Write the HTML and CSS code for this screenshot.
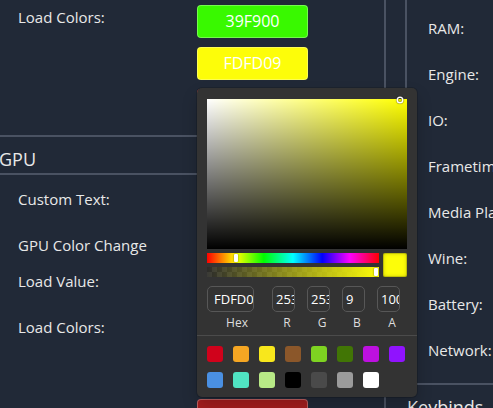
FILE: index.html
```html
<!DOCTYPE html>
<html lang="en">
<head>
<meta charset="utf-8">
<title>Settings</title>
<link rel="stylesheet" href="styles.css">
</head>
<body>
<div class="app">
  <section class="panel panel-left">
    <div class="row row-colors row-first">
      <div class="label">Load Colors:</div>
      <div class="btn-stack">
        <div class="color-btn" style="background:#39F900">39F900</div>
        <div class="color-btn" style="background:#FDFD09">FDFD09</div>
        <div class="color-btn" style="background:#FF0000"></div>
      </div>
    </div>
    <div class="sec-head sec-head-left">GPU</div>
    <div class="row row-46"><div class="label">Custom Text:</div></div>
    <div class="row row-36"><div class="label">GPU Color Change</div></div>
    <div class="row row-46"><div class="label">Load Value:</div></div>
    <div class="row row-colors">
      <div class="label">Load Colors:</div>
      <div class="btn-stack">
        <div class="color-btn" style="background:#39F900"></div>
        <div class="color-btn" style="background:#FDFD09"></div>
        <div class="color-btn" style="background:#A51E1E"></div>
      </div>
    </div>
  </section>
  <section class="panel panel-right">
    <div class="rows">
      <div class="row row-46"><div class="label">RAM:</div></div>
      <div class="row row-46"><div class="label">Engine:</div></div>
      <div class="row row-46"><div class="label">IO:</div></div>
      <div class="row row-46"><div class="label">Frametime:</div></div>
      <div class="row row-46"><div class="label">Media Player:</div></div>
      <div class="row row-46"><div class="label">Wine:</div></div>
      <div class="row row-46"><div class="label">Battery:</div></div>
      <div class="row row-46"><div class="label">Network:</div></div>
    </div>
    <div class="sec-head sec-head-right">Keybinds</div>
  </section>
</div>

<div class="picker">
  <div class="sv">
    <div class="sv-cursor"></div>
  </div>
  <div class="controls">
    <div class="bars">
      <div class="hue"><div class="marker marker-hue"></div></div>
      <div class="alpha"><div class="alpha-fill"></div><div class="marker marker-alpha"></div></div>
    </div>
    <div class="preview"></div>
  </div>
  <div class="fields">
    <div class="field field-hex"><div class="input">FDFD09</div><div class="flabel">Hex</div></div>
    <div class="field"><div class="input">253</div><div class="flabel">R</div></div>
    <div class="field"><div class="input">253</div><div class="flabel">G</div></div>
    <div class="field"><div class="input">9</div><div class="flabel">B</div></div>
    <div class="field"><div class="input">100</div><div class="flabel">A</div></div>
  </div>
  <div class="sep"></div>
  <div class="swatches">
    <div class="swatch" style="background:#D0021B"></div>
    <div class="swatch" style="background:#F5A623"></div>
    <div class="swatch" style="background:#F8E71C"></div>
    <div class="swatch" style="background:#8B572A"></div>
    <div class="swatch" style="background:#7ED321"></div>
    <div class="swatch" style="background:#417505"></div>
    <div class="swatch" style="background:#BD10E0"></div>
    <div class="swatch" style="background:#9013FE"></div>
    <div class="swatch" style="background:#4A90E2"></div>
    <div class="swatch" style="background:#50E3C2"></div>
    <div class="swatch" style="background:#B8E986"></div>
    <div class="swatch" style="background:#000000"></div>
    <div class="swatch" style="background:#4A4A4A"></div>
    <div class="swatch" style="background:#9B9B9B"></div>
    <div class="swatch" style="background:#FFFFFF"></div>
  </div>
</div>
</body>
</html>
```

FILE: styles.css
```css
* {
  box-sizing: border-box;
  margin: 0;
  padding: 0;
}

html,
body {
  width: 493px;
  height: 408px;
  overflow: hidden;
}

body {
  position: relative;
  background: #212937;
  color: #e8e8e8;
  font-family: "Open Sans", "Liberation Sans", sans-serif;
  font-size: 15px;
}

.app {
  display: flex;
  align-items: stretch;
}

.panel-left {
  flex: none;
  width: 389px;
  margin-left: -3px;
  margin-top: -7px;
  border-right: 2px solid #4a5262;
}

.panel-right {
  flex: none;
  width: 220px;
  display: flex;
  flex-direction: column;
}

.rows {
  margin-left: 19px;
  padding-top: 3.5px;
  padding-bottom: 11.5px;
  border-left: 2px solid #4a5262;
}

.row {
  display: flex;
  align-items: flex-start;
  padding: 12px 0 0 21px;
}

.row-46 {
  height: 46px;
}

.row-36 {
  height: 36px;
}

.row-first {
  padding-bottom: 13px;
}

.label {
  flex: none;
  width: 179px;
  line-height: 24px;
  white-space: nowrap;
}

.btn-stack {
  display: flex;
  flex-direction: column;
  gap: 9px;
}

.color-btn {
  width: 111px;
  height: 33px;
  border: 1px solid rgba(255, 255, 255, 0.3);
  border-radius: 4px;
  color: #ffffff;
  font-size: 16px;
  line-height: 31px;
  text-align: center;
}

.sec-head {
  height: 40px;
  padding-top: 9px;
  border-top: 2px solid #4a5262;
  border-bottom: 2px solid #4a5262;
  font-size: 18px;
  line-height: 26px;
  white-space: nowrap;
}

.sec-head-left {
  padding-left: 2px;
}

.sec-head-right {
  padding-left: 21px;
}

/* colour picker popover */
.picker {
  position: absolute;
  left: 197px;
  top: 88px;
  width: 220px;
  padding: 11px 10px 9px;
  background: #333333;
  border-radius: 5px;
  box-shadow: 0 0 0 1px rgba(0, 0, 0, 0.15), 0 8px 16px rgba(0, 0, 0, 0.2);
}

.sv {
  position: relative;
  width: 200px;
  height: 150px;
  background:
    linear-gradient(to top, #000000, rgba(0, 0, 0, 0)),
    linear-gradient(to right, #ffffff, rgba(255, 255, 255, 0)),
    #ffff00;
}

.sv-cursor {
  position: absolute;
  left: 193px;
  top: 1.2px;
  width: 4px;
  height: 4px;
  margin: -2px 0 0 -2px;
  border-radius: 50%;
  box-shadow: 0 0 0 1.5px #ffffff, inset 0 0 1px 1px rgba(0, 0, 0, 0.3), 0 0 1px 2px rgba(0, 0, 0, 0.4);
}

.controls {
  display: flex;
  gap: 4px;
  margin-top: 4px;
}

.bars {
  display: flex;
  flex-direction: column;
  gap: 4px;
  width: 172px;
}

.hue,
.alpha {
  position: relative;
  height: 10px;
}

.hue {
  background: linear-gradient(to right, #ff0000 0%, #ffff00 17%, #00ff00 33%, #00ffff 50%, #0000ff 67%, #ff00ff 83%, #ff0000 100%);
}

.alpha {
  background: repeating-conic-gradient(#3a3a36 0% 25%, #2c2c2a 0% 50%) 0 0 / 10px 10px;
}

.alpha-fill {
  position: absolute;
  inset: 0;
  background: linear-gradient(to right, rgba(253, 253, 9, 0), rgb(253, 253, 9));
}

.marker {
  position: absolute;
  top: 1px;
  width: 4px;
  height: 8px;
  background: #ffffff;
  border-radius: 1px;
  box-shadow: 0 0 2px rgba(0, 0, 0, 0.6);
}

.marker-hue {
  left: 27px;
}

.marker-alpha {
  left: 167px;
}

.preview {
  width: 24px;
  height: 24px;
  background: #fdfd09;
  border-radius: 2px;
  box-shadow: inset 0 0 0 1px rgba(0, 0, 0, 0.15), inset 0 0 4px rgba(0, 0, 0, 0.25);
}

.fields {
  display: flex;
  gap: 5px;
  margin-top: 9px;
}

.field {
  width: 30px;
}

.field-hex {
  width: 60px;
}

.input {
  width: 23px;
  height: 26px;
  padding-left: 3px;
  border: 1px solid #575757;
  border-radius: 5px;
  overflow: hidden;
  white-space: nowrap;
  color: #ffffff;
  font-size: 13px;
  line-height: 24px;
}

.field-hex .input {
  width: 47px;
  padding-left: 6px;
}

.flabel {
  margin-top: 4px;
  color: #dddddd;
  font-size: 12px;
  line-height: 14px;
  text-align: center;
}

.sep {
  height: 1px;
  margin: 5px -10px 0;
  background: #4b4b4b;
}

.swatches {
  display: grid;
  grid-template-columns: repeat(8, 16px);
  gap: 10px;
  margin-top: 10px;
}

.swatch {
  width: 16px;
  height: 16px;
  border-radius: 3px;
}
```
